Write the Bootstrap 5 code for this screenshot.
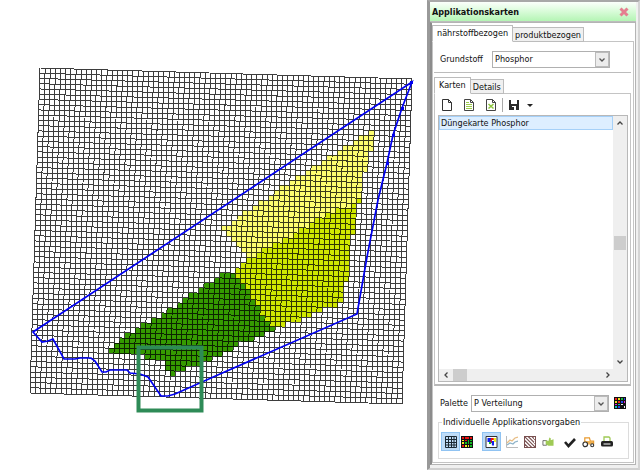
<!DOCTYPE html>
<html lang="de">
<head>
<meta charset="utf-8">
<meta name="viewport" content="width=device-width, initial-scale=1">
<title>Applikationskarten</title>
<link href="https://cdn.jsdelivr.net/npm/bootstrap@5.3.0/dist/css/bootstrap.min.css" rel="stylesheet">
<style>
body { font-family: "DejaVu Sans Condensed", "Noto Sans", sans-serif; font-size: 9px; line-height: 12px; color: #111; background: #fff; }
.map-area { min-width: 0; }
.map-area svg { width: 100%; height: auto; }
.side-panel { flex: 0 0 213px; border: 2px solid #a8a8a8; border-left: 3px solid #999; border-right-color: #d4d4d4; border-bottom-color: #d0d0d0; background: #f0f0f0; padding: 0 2px 3px 0; }
.panel-head { height: 20px; padding: 0 6px 0 2px; background: linear-gradient(#fbfffb, #d8fbd8 50%, #b4f5b4); border-bottom: 1px solid #bdbdbd; }
.panel-head h1 { font-size: 9px; line-height: 12px; }
.icon-btn { border: 1px solid transparent; background: none; padding: 0; display: inline-flex; align-items: center; justify-content: center; border-radius: 0; }
.panel-body { border: 1px solid #b4b4b4; border-left-width: 2px; border-left-color: #8c8c8c; background: #fff; padding: 2px 1px 1px 0; }
.tab-strip { margin-bottom: -1px; position: relative; z-index: 1; }
.tab-btn { border: 1px solid #bcbcbc; background: #f0f0f0; font-size: 9px; line-height: 12px; height: 15px; padding: 0 2px; color: #111; white-space: nowrap; }
.tab-btn.active { background: #fff; height: 17px; padding: 0 4px 2px; border-bottom-color: #fff; }
.tab-btn + .tab-btn { border-left: 0; }
.tab-page { border: 1px solid #c4c4c4; background: #fff; }
.outer-page { padding: 8px 2px 3px 1px; }
.inner-page { padding: 1px 2px 2px 3px; border-bottom: 2px solid #b8b8b8; }
.field-row { height: 18px; padding-left: 6px; }
.combo { height: 17px; border: 1px solid #b0b0b0; border-radius: 0; font-size: 9px; line-height: 12px; padding: 0 18px 0 2px; color: #111; appearance: none; background: #fff url("data:image/svg+xml,%3Csvg xmlns='http://www.w3.org/2000/svg' width='14' height='15'%3E%3Crect x='.5' y='.5' width='13' height='14' fill='%23ececec' stroke='%23bbb'/%3E%3Cpath d='M4.500 6.500 7 9 9.500 6.500' fill='none' stroke='%23555' stroke-width='1.300'/%3E%3C/svg%3E") no-repeat right 0 center; }
.combo-material { width: 118px; margin-right: 21px; }
.combo-palette { width: 138px; }
.rule { border-top: 1px solid #bcbcbc; margin: 4px 0; }
.tool-row { height: 20px; padding-left: 2px; }
.vline { width: 1px; height: 14px; background: #aaa; }
.map-list { border: 1px solid #b8b8b8; }
.list-body { min-height: 0; }
.map-item { font-size: 9px; line-height: 12px; height: 14px; padding: 0 1px; background: #ddeeff; border: 1px solid #a5d0f8; border-radius: 0; color: #111; }
.vbar { width: 14px; background: #efefef; }
.hbar { height: 12px; background: #efefef; }
.vthumb { width: 12px; height: 14px; background: #cdcdcd; }
.hthumb { width: 14px; height: 12px; background: #cdcdcd; }
.arrow { fill: none; stroke: #444; stroke-width: 1.3; }
.groupbox { border: 1px solid #dcdcdc; margin: 0 2px 0 4px; padding: 4px 0 7px 2px; height: 43px; }
.groupbox legend { float: none; width: auto; font-size: 9px; line-height: 12px; margin: 0 0 0 1px; padding: 0 1px; }
.tool-btn { width: 19px; height: 19px; }
.tool-btn.active { background: #bfdcf8; border-color: #90c3f2; }
</style>
<script src="https://cdn.jsdelivr.net/npm/bootstrap@5.3.0/dist/js/bootstrap.bundle.min.js"></script>
</head>
<body>
<div class="d-flex min-vh-100">
  <main class="map-area flex-grow-1">
    <svg id="map" viewBox="0 0 427 470" role="img" aria-label="Feldkarte Phosphor">
      <g id="zones" shape-rendering="crispEdges"></g>
      <path id="grid" fill="none" stroke="#000" stroke-opacity=".76" shape-rendering="crispEdges"/>
      <path d="M412 82 33 332 42 342 48 341 53 339 64 359H75L80 358H91L95 361 102 372H106L110 370H127L130 373 140 374 148 377 161 396H168L175 394 220 374 357 314 367 257 378 200 387 163 393 135 402 108Z" fill="none" stroke="#0000f0" stroke-width="1.700"/>
      <path d="M386 162h3v3h-3zM392 134h3v3h-3zM401 107h3v3h-3zM410 81h3v3h-3z" fill="#0000f0"/>
      <rect x="138.500" y="347.500" width="63" height="63" fill="none" stroke="#2e8b57" stroke-width="4"/>
    </svg>
  </main>
  <aside class="side-panel d-flex flex-column">
    <div class="panel-head d-flex align-items-center justify-content-between">
      <h1 class="fw-bold m-0">Applikationskarten</h1>
      <button class="icon-btn" type="button" aria-label="Schließen"><svg width="10" height="10" viewBox="0 0 10 10"><path d="M1.500 1.500l7 7m0-7l-7 7" stroke="#e57f90" stroke-width="3"/></svg></button>
    </div>
    <div class="panel-body flex-grow-1 d-flex flex-column">
      <div class="tab-strip d-flex align-items-end" role="tablist">
        <button class="tab-btn active" type="button" role="tab" aria-selected="true">nährstoffbezogen</button>
        <button class="tab-btn" type="button" role="tab" aria-selected="false">produktbezogen</button>
      </div>
      <div class="tab-page outer-page flex-grow-1 d-flex flex-column">
        <div class="field-row d-flex align-items-center">
          <label for="material" class="me-auto">Grundstoff</label>
          <select id="material" class="combo combo-material"><option>Phosphor</option></select>
        </div>
        <div class="rule"></div>
        <div class="tab-strip d-flex align-items-end" role="tablist">
          <button class="tab-btn active" type="button" role="tab" aria-selected="true">Karten</button>
          <button class="tab-btn" type="button" role="tab" aria-selected="false">Details</button>
        </div>
        <div class="tab-page inner-page flex-grow-1 d-flex flex-column">
          <div class="tool-row d-flex align-items-center gap-1">
            <button class="icon-btn me-1" type="button" aria-label="Neue Karte"><svg width="12" height="12" viewBox="0 0 12 12"><path d="M1.500.500h6l3 3v8h-9zM7.500.500v3h3" fill="#fff" stroke="#333"/></svg></button>
            <button class="icon-btn me-1" type="button" aria-label="Karte bearbeiten"><svg width="12" height="12" viewBox="0 0 12 12"><path d="M1.500.500h6l3 3v8h-9zM7.500.500v3h3" fill="#fff" stroke="#444"/><path d="M3 3.500h3M3 5.500h6M3 7.500h6M3 9.500h6" stroke="#9ccc4a"/></svg></button>
            <button class="icon-btn" type="button" aria-label="Karte löschen"><svg width="12" height="12" viewBox="0 0 12 12"><path d="M1.500.500h6l3 3v8h-9zM7.500.500v3h3" fill="#fff" stroke="#444"/><path d="M3.500 5l5 4.500m0-4.500l-5 4.500" stroke="#8dc63f" stroke-width="1.500"/></svg></button>
            <span class="vline"></span>
            <button class="icon-btn" type="button" aria-label="Speichern"><svg width="12" height="12" viewBox="0 0 12 12"><path d="M1 1h10v10H1z" fill="#2b2b2b"/><path d="M3 1h6v4H3zM4 7h4v4H4z" fill="#fff"/><path d="M4 8h2v3H4z" fill="#2b2b2b"/></svg></button>
            <button class="icon-btn" type="button" aria-label="Speicheroptionen"><svg width="8" height="5" viewBox="0 0 8 5"><path d="M1 1h6L4 4z" fill="#222"/></svg></button>
          </div>
          <div class="map-list flex-grow-1 d-flex flex-column">
            <div class="list-body flex-grow-1 d-flex">
              <div class="list-group list-group-flush flex-grow-1"><button type="button" class="map-item text-start">Düngekarte Phosphor</button></div>
              <div class="vbar d-flex flex-column align-items-center justify-content-between py-1">
                <svg width="8" height="6"><path class="arrow" d="M1.500 4.500 4 2l2.500 2.500"/></svg>
                <span class="vthumb"></span>
                <svg width="8" height="6"><path class="arrow" d="M1.500 1.500 4 4l2.500-2.500"/></svg>
              </div>
            </div>
            <div class="hbar d-flex align-items-center">
              <svg class="ms-1 me-1" width="6" height="8"><path class="arrow" d="M4.500 1.500 2 4l2.500 2.500"/></svg>
              <span class="hthumb me-auto"></span>
              <svg class="me-3" width="6" height="8"><path class="arrow" d="M1.500 1.500 4 4 1.500 6.500"/></svg>
            </div>
          </div>
        </div>
        <div class="field-row d-flex align-items-center mt-2">
          <label for="palette" class="me-auto">Palette</label>
          <select id="palette" class="combo combo-palette"><option>P Verteilung</option></select>
          <button class="icon-btn ms-1 me-1" type="button" aria-label="Palette bearbeiten"><svg width="12" height="12" viewBox="0 0 12 12"><path d="M0 0h12v12H0z" fill="#111"/><path d="M1 1h2v2H1zM4 4h2v2H4z" fill="#e22"/><path d="M4 1h2v2H4zM1 4h2v2H1z" fill="#e8e020"/><path d="M7 1h2v2H7z" fill="#18b838"/><path d="M10 1h1v2h-1zM7 4h2v2H7zM4 9h2v2H4z" fill="#24e"/><path d="M10 4h1v2h-1zM1 7h2v1H1z" fill="#d2d"/><path d="M4 7h2v1H4zM1 9h2v2H1z" fill="#1bb"/><path d="M7 7h2v1H7zM10 9h1v2h-1z" fill="#eee"/></svg></button>
        </div>
        <fieldset class="groupbox mt-1">
          <legend>Individuelle Applikationsvorgaben</legend>
          <div class="d-flex align-items-center">
            <button class="icon-btn tool-btn active" type="button" aria-label="Raster"><svg width="12" height="12" viewBox="0 0 12 12"><path d="M.500.500h11v11H.500zM3.500 0v12M6.500 0v12M9 0v12M0 3.500h12M0 6.500h12M0 9h12" fill="none" stroke="#1c2833"/></svg></button>
            <button class="icon-btn" type="button" aria-label="Farbraster"><svg width="12" height="12" viewBox="0 0 12 12"><path d="M0 0h12v12H0z" fill="#111"/><path d="M1 1h2v2H1zM4 1h4v2H4zM9 1h2v2H9zM4 4h2v1H4z" fill="#e11"/><path d="M1 4h2v1H1zM1 6h2v2H1zM4 9h2v2H4zM7 9h1v2H7z" fill="#ee2"/><path d="M4 6h2v2H4zM7 4h1v4H7zM9 4h2v1H9zM9 6h2v2H9zM9 9h2v2H9z" fill="#1b2"/><path d="M1 9h2v2H1z" fill="#e11"/></svg></button>
            <button class="icon-btn tool-btn active ms-2" type="button" aria-label="Zonen"><svg width="13" height="12" viewBox="0 0 13 12"><path d="M1 .500h11v11H1z" fill="#fff" stroke="#333"/><path d="M2.500 2h4v4h-4z" fill="#12e"/><path d="M6 2h3v2H7v3H5z" fill="#e11"/><path d="M8.500 2H11v4H9z" fill="#ee2"/><path d="M6.500 5H9v4.500H7z" fill="#12e"/><path d="M4 6h2v2H4z" fill="#1b2"/></svg></button>
            <button class="icon-btn ms-1" type="button" aria-label="Diagramm"><svg width="12" height="12" viewBox="0 0 12 12"><path d="M.500 0v11.500H12" fill="none" stroke="#bbb"/><path d="M1 7l3-3 2 1 3-3 3-1" fill="none" stroke="#e7bd85" stroke-width="1.300"/><path d="M1 9l3-2 3 1 2-2 3-1" fill="none" stroke="#8db3c8" stroke-width="1.300"/></svg></button>
            <button class="icon-btn ms-1" type="button" aria-label="Schraffur"><svg width="12" height="12" viewBox="0 0 13 13"><path d="M.500.500h12v12H.500zM0 0l13 13M4 0l9 9M8 0l5 5M0 4l9 9M0 8l5 5" fill="#fff" stroke="#795050" stroke-width="1.200"/></svg></button>
            <button class="icon-btn ms-1" type="button" aria-label="Auswahl"><svg width="12" height="12" viewBox="0 0 13 12"><path d="M1 4.500h4v5H1z" fill="#fff" stroke="#666"/><path d="M4 4l3 1 1-4 1.500 1v2l3-1v7H7L4 8.500z" fill="#9fca55"/></svg></button>
            <button class="icon-btn ms-2" type="button" aria-label="Übernehmen"><svg width="12" height="12" viewBox="0 0 12 12"><path d="M1 6l3.500 4L11 3" fill="none" stroke="#222" stroke-width="2.600"/></svg></button>
            <button class="icon-btn ms-1" type="button" aria-label="Traktor"><svg width="13" height="12" viewBox="0 0 14 12"><path d="M3 5V1.500h5L9 5h3.500v3H7" fill="none" stroke="#e99a2e" stroke-width="1.300"/><path d="M2 5h10v3H2z" fill="#efb04e"/><circle cx="3.500" cy="8.500" r="2.500" fill="#fff" stroke="#333" stroke-width="1.300"/><circle cx="11" cy="9.500" r="1.600" fill="#fff" stroke="#333" stroke-width="1.200"/></svg></button>
            <button class="icon-btn ms-1" type="button" aria-label="Drucken"><svg width="12" height="12" viewBox="0 0 12 12"><path d="M3 5V1h5l1 1v3" fill="#fff" stroke="#9fca55" stroke-width="1.300"/><rect y="5" width="12" height="5.500" rx="1.500" fill="#222"/><path d="M2.500 8h7" stroke="#fff"/></svg></button>
          </div>
        </fieldset>
      </div>
    </div>
  </aside>
</div>
<script>
// The field raster is slightly rotated: col/row vectors run along its two edges.
const cols = 72, rows = 62, origin = [40, 68];
const colVec = [372 / cols, 11 / cols], rowVec = [-10 / rows, 325 / rows];
const at = (c, r) => [0, 1].map(i => origin[i] + c * colVec[i] + r * rowVec[i]);
const zones = [
  ['#359a00', [[235,272],[224,274],[200,288],[182,302],[170,308],[153,320],[137,328],[120,338],[109,350],[109,353],[137,353],[150,359],[167,364],[168,376],[172,376],[178,372],[193,366],[210,360],[228,352],[240,343],[262,337],[273,329],[268,325],[260,308],[251,295],[241,282]]],
  ['#d0e800', [[361,197],[349,206],[328,213],[307,227],[270,247],[250,259],[234,270],[241,282],[251,295],[260,308],[268,327],[282,326],[300,320],[322,311],[343,302],[347,275],[349,240],[355,235],[356,205],[361,205]]],
  ['#ffff70', [[374,129],[368,133],[345,147],[317,165],[290,181],[271,195],[256,206],[240,216],[222,228],[232,238],[236,247],[249,259],[270,247],[307,227],[328,213],[349,206],[361,199],[361,171],[367,171],[368,151],[374,150]]]
];
const inside = ([x, y], poly) => {
  let hit = false;
  for (let i = 0, j = poly.length - 1; i < poly.length; j = i++) {
    const [xi, yi] = poly[i], [xj, yj] = poly[j];
    if (yi > y !== yj > y && x < (xj - xi) * (y - yi) / (yj - yi) + xi) hit = !hit;
  }
  return hit;
};
const fills = zones.map(() => '');
for (let r = 0; r < rows; r++) for (let c = 0; c < cols; c++) {
  const z = zones.findIndex(([, poly]) => inside(at(c + .5, r + .5), poly));
  if (z >= 0) fills[z] += 'M' + [at(c, r), at(c + 1, r), at(c + 1, r + 1), at(c, r + 1)].join('L') + 'Z';
}
document.getElementById('zones').innerHTML = zones.map(([color], i) => `<path fill="${color}" d="${fills[i]}"/>`).join('');
let lines = '';
for (let c = 0; c <= cols; c++) lines += 'M' + at(c, 0) + 'L' + at(c, rows);
for (let r = 0; r <= rows; r++) lines += 'M' + at(0, r) + 'L' + at(cols, r);
document.getElementById('grid').setAttribute('d', lines);
</script>
</body>
</html>
